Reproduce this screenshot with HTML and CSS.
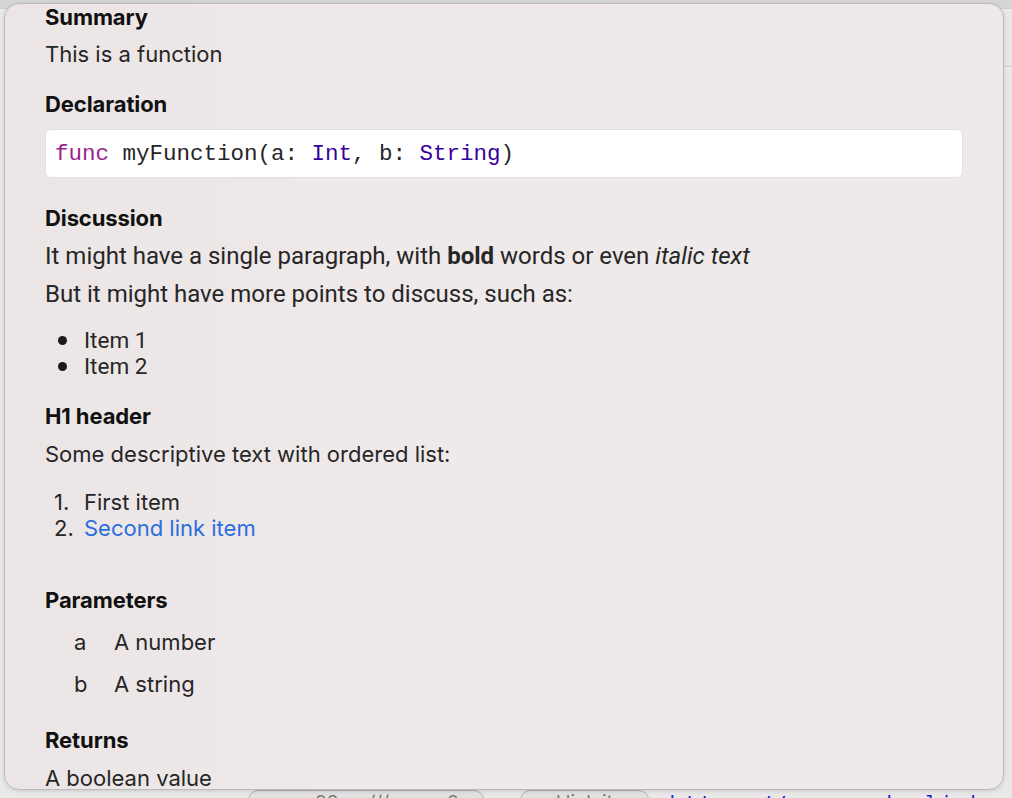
FILE: index.html
```html
<!DOCTYPE html>
<html>
<head>
<meta charset="utf-8">
<link rel="stylesheet" href="styles.css">
</head>
<body>
<div class="editor">
  <div class="top-strip"></div>
  <div class="side-marks">
    <div class="mark mark-top"></div>
    <div class="mark mark-mid"></div>
  </div>
  <div class="bottom-row">
    <span class="pill pill-a"><span class="pa-num">88</span><span class="pa-sl">///</span><span class="pa-zero">0</span></span>
    <span class="pill pill-b">and link item</span>
    <span class="url">https://raywenderlich</span>
  </div>
</div>

<div class="popover">
  <div class="content">
    <h3 class="h">Summary</h3>
    <p class="p">This is a function</p>

    <h3 class="h gap">Declaration</h3>
    <div class="code"><span class="kw">func</span> myFunction(a: <span class="ty">Int</span>, b: <span class="ty">String</span>)</div>

    <h3 class="h gap-disc">Discussion</h3>
    <div class="disc">
      <p class="p p-next">It might have a single paragraph, with <b>bold</b> words or even <i>italic text</i></p>
      <p class="p p-next">But it might have more points to discuss, such as:</p>
      <ul class="bullets">
        <li>Item 1</li>
        <li>Item 2</li>
      </ul>
    </div>

    <h3 class="h gap">H1 header</h3>
    <p class="p p-next">Some descriptive text with ordered list:</p>
    <ol class="numbers">
      <li><span class="num">1.</span>First item</li>
      <li><span class="num">2.</span><a class="link" href="#">Second link item</a></li>
    </ol>

    <h3 class="h gap-params">Parameters</h3>
    <div class="params">
      <div class="param"><span class="pname">a</span><span>A number</span></div>
      <div class="param"><span class="pname">b</span><span>A string</span></div>
    </div>

    <h3 class="h gap-returns">Returns</h3>
    <p class="p p-next">A boolean value</p>
  </div>
</div>
</body>
</html>
```

FILE: styles.css
```css
html, body {
  margin: 0;
  padding: 0;
  width: 1012px;
  height: 798px;
  overflow: hidden;
}

body {
  background: #e9e9e9;
  font-family: Inter, "Noto Sans", sans-serif;
  position: relative;
}

.editor {
  width: 1012px;
  height: 798px;
  position: relative;
}

.top-strip {
  height: 8px;
  background: #d6d6d6;
  border-bottom: 1px solid #cfcfcf;
}

.side-marks .mark {
  position: absolute;
  right: 0;
  width: 12px;
  height: 1px;
  background: #cfcfcf;
}
.mark-top { top: 8px; }
.mark-mid { top: 66px; }

.bottom-row {
  position: absolute;
  left: 0;
  top: 790px;
  width: 1012px;
  height: 8px;
  overflow: hidden;
  display: flex;
  align-items: flex-start;
}

.pill {
  display: inline-block;
  border: 1px solid #b0b0b0;
  border-radius: 10px;
  background: #e2e2e2;
  color: #7a7a7a;
  padding: 1px 8px 0;
  font-family: Inter, sans-serif;
  font-size: 19px;
  line-height: 22px;
  white-space: nowrap;
}
.pill-a {
  margin-left: 248px;
  width: 218px;
  display: flex;
}
.pa-num { margin-left: 58px; }
.pa-sl { margin-left: 30px; }
.pa-zero { margin-left: auto; margin-right: 16px; }
.pill-b {
  margin-left: 36px;
  padding: 1px 8px 0 6px;
}
.url {
  margin-left: 20px;
  padding-top: 2px;
  color: #1c1ccf;
  font-family: "DejaVu Sans Mono", "Liberation Mono", monospace;
  font-size: 20px;
  line-height: 22px;
  letter-spacing: 3px;
  white-space: nowrap;
}

.popover {
  position: absolute;
  left: 4px;
  top: 3px;
  width: 998px;
  height: 785px;
  border: 1px solid #bdbaba;
  border-radius: 15px;
  background: linear-gradient(90deg, #ebe5e5 0%, #efe9e9 40%, #efeaea 100%);
  box-shadow: 0 1px 4px rgba(0,0,0,0.15);
  overflow: hidden;
}

.content {
  padding: 0 0 0 40px;
  color: #262626;
}

.h {
  margin: 0;
  font-size: 22px;
  line-height: 26px;
  font-weight: 700;
  color: #111;
  letter-spacing: -0.1px;
}

.p {
  margin: 11px 0 0;
  font-size: 22px;
  line-height: 26px;
  font-weight: 400;
  color: #262626;
}

.p-next { margin-top: 12px; }

.gap { margin-top: 24px; }
.gap-disc { margin-top: 27px; }
.gap-params { margin-top: 46px; }
.gap-returns { margin-top: 30px; }

.code {
  margin: 12px 40px 0 0;
  height: 47px;
  box-sizing: content-box;
  background: #ffffff;
  border: 1px solid #e4dede;
  border-radius: 6px;
  padding: 0 0 0 9px;
  display: flex;
  align-items: center;
  font-family: "Liberation Mono", "DejaVu Sans Mono", monospace;
  font-size: 22.5px;
  color: #262626;
  white-space: pre;
}
.kw { color: #9b2393; }
.ty { color: #3900a0; }

.disc .p {
  font-family: Roboto, Inter, sans-serif;
  font-size: 24px;
}

.bullets {
  margin: 20px 0 0;
  padding: 0;
  list-style: none;
  font-family: Roboto, Inter, sans-serif;
  font-size: 22.5px;
  line-height: 26px;
}
.bullets li {
  display: flex;
  align-items: center;
  padding-left: 13px;
}
.bullets li::before {
  content: "";
  width: 9px;
  height: 9px;
  border-radius: 50%;
  background: #1a1a1a;
  margin-right: 17px;
}

.numbers {
  margin: 22px 0 0;
  padding: 0;
  list-style: none;
  font-size: 22px;
  line-height: 26px;
}
.numbers li {
  display: flex;
}
.num {
  width: 30px;
  padding-left: 9px;
}
.link {
  color: #2b6ee0;
  text-decoration: none;
}

.params {
  margin-top: 16px;
  display: flex;
  flex-direction: column;
  gap: 16px;
  font-size: 22px;
  line-height: 26px;
}
.param {
  display: flex;
}
.pname {
  width: 40px;
  padding-left: 29px;
}
```
